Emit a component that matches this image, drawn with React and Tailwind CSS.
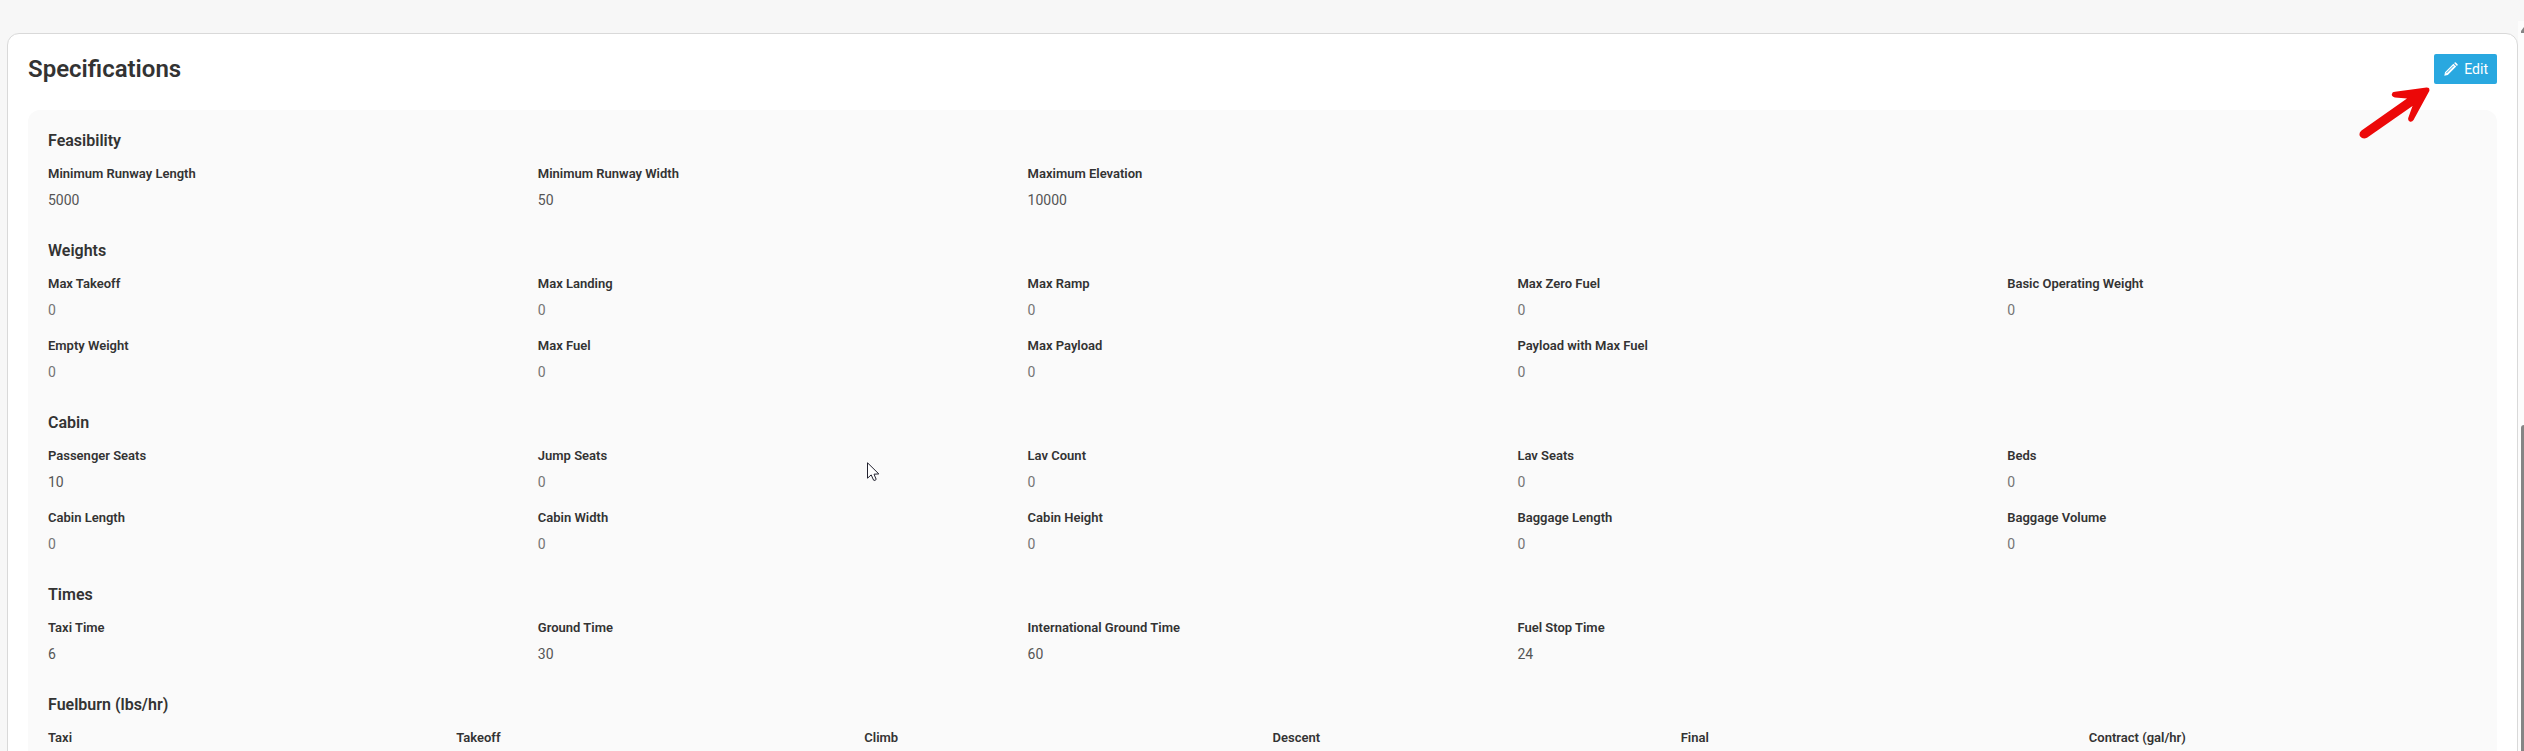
/**
 * Aircraft specifications page - read-only view with an edit action
 */
const sections = [
  {
    title: 'Feasibility',
    columns: 5,
    fields: [
      { label: 'Minimum Runway Length', value: 5000 },
      { label: 'Minimum Runway Width', value: 50 },
      { label: 'Maximum Elevation', value: 10000 },
    ],
  },
  {
    title: 'Weights',
    columns: 5,
    fields: [
      { label: 'Max Takeoff', value: 0 },
      { label: 'Max Landing', value: 0 },
      { label: 'Max Ramp', value: 0 },
      { label: 'Max Zero Fuel', value: 0 },
      { label: 'Basic Operating Weight', value: 0 },
      { label: 'Empty Weight', value: 0 },
      { label: 'Max Fuel', value: 0 },
      { label: 'Max Payload', value: 0 },
      { label: 'Payload with Max Fuel', value: 0 },
    ],
  },
  {
    title: 'Cabin',
    columns: 5,
    fields: [
      { label: 'Passenger Seats', value: 10 },
      { label: 'Jump Seats', value: 0 },
      { label: 'Lav Count', value: 0 },
      { label: 'Lav Seats', value: 0 },
      { label: 'Beds', value: 0 },
      { label: 'Cabin Length', value: 0 },
      { label: 'Cabin Width', value: 0 },
      { label: 'Cabin Height', value: 0 },
      { label: 'Baggage Length', value: 0 },
      { label: 'Baggage Volume', value: 0 },
    ],
  },
  {
    title: 'Times',
    columns: 5,
    fields: [
      { label: 'Taxi Time', value: 6 },
      { label: 'Ground Time', value: 30 },
      { label: 'International Ground Time', value: 60 },
      { label: 'Fuel Stop Time', value: 24 },
    ],
  },
  {
    title: 'Fuelburn (lbs/hr)',
    columns: 6,
    fields: [
      { label: 'Taxi' },
      { label: 'Takeoff' },
      { label: 'Climb' },
      { label: 'Descent' },
      { label: 'Final' },
      { label: 'Contract (gal/hr)' },
    ],
  },
];

function PencilIcon() {
  return (
    <svg viewBox="0 0 14 14" className="w-[14px] h-[14px]" aria-hidden="true">
      <path
        d="M0.3 13.7 L1 10.2 L9.4 1.8 L12.2 4.6 L3.8 13 Z M10.1 1.1 L10.8 0.4 Q11.3 0 11.8 0.4 L13.6 2.2 Q14 2.7 13.6 3.2 L12.9 3.9 Z"
        fill="white"
      />
      <path d="M2.3 11.2 L9.7 3.8" stroke="#29a8e0" strokeWidth="1" />
    </svg>
  );
}

// Callout arrow pointing at the Edit button
function CalloutArrow() {
  return (
    <svg
      viewBox="0 0 72 54"
      className="absolute right-[66px] top-[33px] z-10 w-[72px] h-[54px] pointer-events-none"
      aria-hidden="true"
    >
      <path
        d="M2.5 43.5 L48 11.5 L36 10.5 Q32.5 9.8 32.8 7.2 Q33.2 4.8 36 4.8 L67.5 0.5 Q71 0.3 70.3 4 L54.5 33 Q53 35.4 50.7 34.6 Q48.6 33.6 49.3 30.8 L53.5 19 L8 50.8 Q3.8 52.6 1.2 49.5 Q-0.8 46.3 2.5 43.5 Z"
        fill="#ec0808"
      />
    </svg>
  );
}

function MouseCursor() {
  return (
    <svg
      viewBox="0 0 13 20"
      className="absolute left-[34%] top-[352px] w-[13px] h-[20px] pointer-events-none"
      aria-hidden="true"
    >
      <path
        d="M0.5 0.8 L0.5 16.2 L4.2 12.9 L6.6 18.2 Q8 19 9.2 17.4 L7 12.2 L11.8 11.9 Z"
        fill="white"
        stroke="#22222f"
        strokeWidth="1"
      />
    </svg>
  );
}

function Field({ label, value }) {
  return (
    <div className="mb-[10px]">
      <dt className="h-[26px] text-[13px] leading-[26px] font-semibold text-[#333333]">{label}</dt>
      <dd className={`h-[26px] text-sm leading-[26px] ${value ? 'text-[#555555]' : 'text-[#757575]'}`}>{value}</dd>
    </div>
  );
}

function Section({ title, columns, fields }) {
  return (
    <section className="mb-[18px]">
      <h3 className="mb-[10px] text-base leading-5 font-semibold text-[#333333]">{title}</h3>
      <dl className={`grid ${columns === 6 ? 'grid-cols-6' : 'grid-cols-5'}`}>
        {fields.map((field) => (
          <Field key={field.label} {...field} />
        ))}
      </dl>
    </section>
  );
}

function Scrollbar() {
  return (
    <div className="mt-[21px] w-[6px] flex flex-col items-end bg-[#fcfcfc] overflow-hidden" aria-hidden="true">
      <svg viewBox="0 0 3 6" className="mt-[6px] w-[3px] h-[6px] shrink-0">
        <path d="M3 0 L0 4 L0 6 L3 6 Z" fill="#858585" />
      </svg>
      <div className="mt-[392px] w-[3px] flex-1 rounded-tl-[3px] bg-[#858585]" />
    </div>
  );
}

export default function App() {
  return (
    <div className="flex h-screen overflow-hidden bg-[#f7f7f7] font-['Roboto',sans-serif]">
      <main className="flex-1 pl-[7px] pt-[33px]">
        <div className="rounded-[12px] border border-[#d9d9d9] bg-white p-5">
          <header className="relative mb-[26px] flex h-[30px] items-center justify-between">
            <h2 className="text-2xl font-semibold text-[#333333]">Specifications</h2>
            <button
              type="button"
              className="flex h-[30px] items-center gap-[6px] rounded-[2px] bg-[#29a8e0] pl-[10px] pr-[9px] text-sm leading-5 font-normal text-white"
            >
              <PencilIcon />
              Edit
            </button>
            <CalloutArrow />
          </header>

          <div className="relative rounded-[12px] bg-[#fafafa] pl-5 pt-[21px] pb-0.5">
            {sections.map((section) => (
              <Section key={section.title} {...section} />
            ))}
            <MouseCursor />
          </div>
        </div>
      </main>
      <Scrollbar />
    </div>
  );
}
